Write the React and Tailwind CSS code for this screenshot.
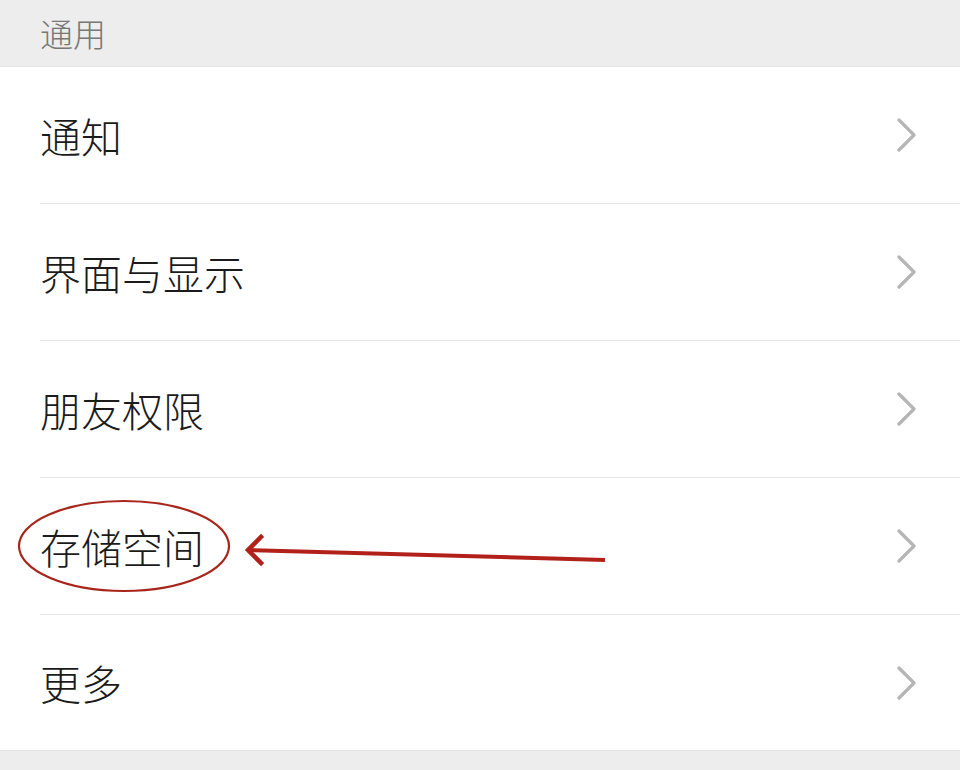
const items = ["通知", "界面与显示", "朋友权限", "存储空间", "更多"];

function Chevron() {
  return (
    <svg width="20" height="34" viewBox="0 0 20 34" fill="none">
      <path d="M2 2 L17 17 L2 32" stroke="#b5b5b5" strokeWidth="3.2" strokeLinecap="round" strokeLinejoin="round" />
    </svg>
  );
}

function Row({ label, last }) {
  return (
    <div className="pl-10 bg-white">
      <div
        className={
          "flex items-center justify-between pr-[43px] " +
          (last ? "h-[135px]" : "h-[137px] border-b border-[#e6e6e6]")
        }
      >
        <span className="text-[41px] leading-none font-light text-[#1b1b1b]">{label}</span>
        <Chevron />
      </div>
    </div>
  );
}

export default function App() {
  return (
    <div
      className="relative w-[960px] h-[770px] bg-[#ededed] overflow-hidden"
      style={{ fontFamily: '"Noto Sans CJK SC", "Noto Sans", sans-serif' }}
    >
      <div className="h-[67px] flex items-center pl-10 border-b border-[#e3e3e3]">
        <span className="text-[33px] leading-none font-light text-[#777777]">通用</span>
      </div>
      <div className="bg-white border-b border-[#e3e3e3]">
        {items.map((t, i) => (
          <Row key={t} label={t} last={i === items.length - 1} />
        ))}
      </div>

      <svg className="absolute left-0 top-0 pointer-events-none" width="960" height="770">
        <ellipse cx="124" cy="546" rx="105" ry="45" fill="none" stroke="#a8251c" strokeWidth="2.2" />
        <path d="M248 550 L605 560" stroke="#b2201a" strokeWidth="4" strokeLinecap="butt" />
        <path d="M261 537 L248 550 L261 563" fill="none" stroke="#b2201a" strokeWidth="4.5" strokeLinecap="square" strokeLinejoin="miter" />
      </svg>
    </div>
  );
}
